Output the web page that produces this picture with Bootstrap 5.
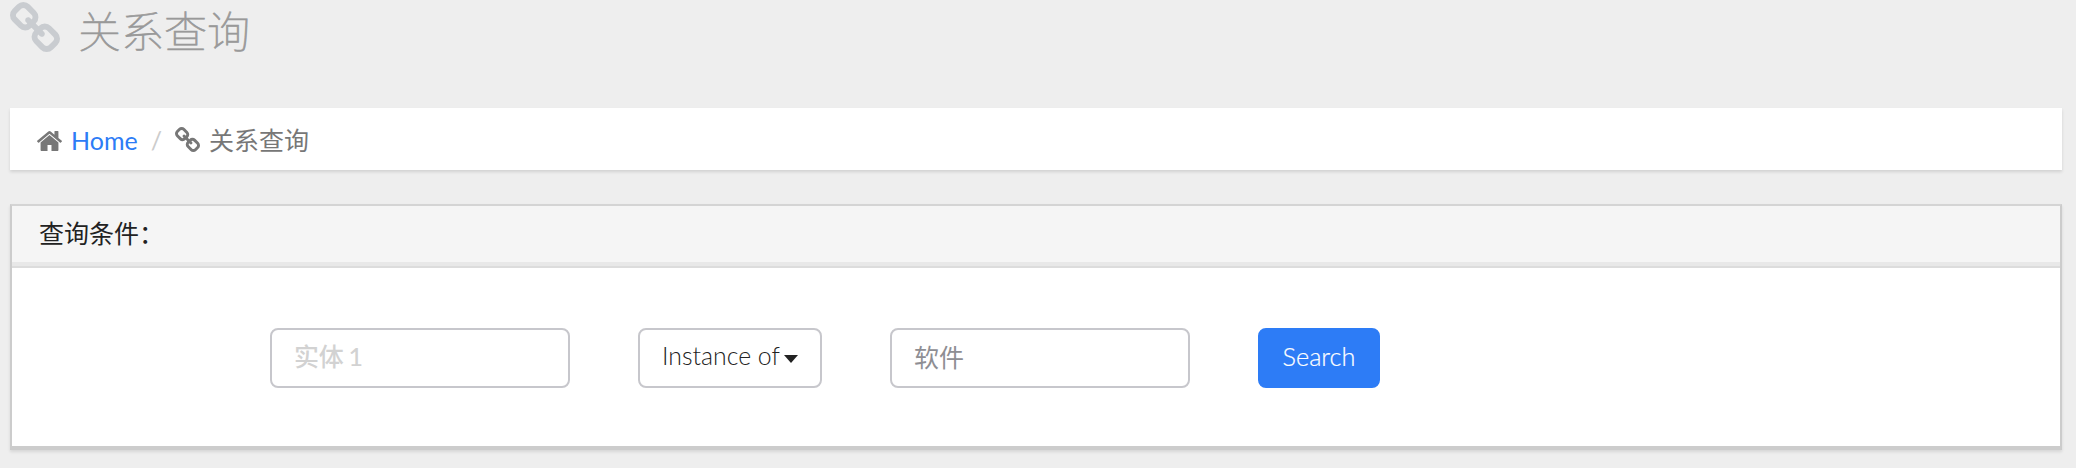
<!DOCTYPE html>
<html lang="zh-CN">
<head>
<meta charset="utf-8">
<meta name="viewport" content="width=device-width, initial-scale=1">
<title>关系查询</title>
<link rel="stylesheet" href="https://cdn.jsdelivr.net/npm/bootstrap@5.3.0/dist/css/bootstrap.min.css">
<style>
body{background:#eee;font-family:Lato,"Noto Sans CJK SC",sans-serif;font-size:25px;line-height:36px;color:#222;height:468px;overflow:hidden}
.page-wrap{padding:0 14px 0 10px}
.page-title{height:108px;gap:18px;font-size:43px;font-weight:100;line-height:50px;color:#999}
.page-title svg{width:50px;height:50px;margin-top:2px;fill:#c9ccd0}
.page-title span{margin-top:7px;-webkit-text-stroke:.7px #999}
.crumbs{height:62px;padding:0 27px;background:#fff;box-shadow:0 2px 3px rgba(0,0,0,.12);color:#777;font-size:25px}
.crumbs svg{fill:#777;flex:none}
.crumbs a{color:#2d7cf6;margin-left:9px}
.crumbs .sep{color:#ccc;margin:0 13px 0 13px}
.crumbs .here{margin-left:9px}
.crumbs a,.crumbs span{position:relative;top:1px}
.panel-box{margin-top:34px;height:246px;border:2px solid #ccc;border-top-color:#d4d4d4;border-bottom-width:4px;border-radius:0;box-shadow:0 2px 3px rgba(0,0,0,.1)}
.panel-head{height:62px;padding:9px 27px;background:#f5f5f5;border-bottom:2px solid #dcdcdc;border-radius:0!important;box-shadow:inset 0 -4px #e8e8e8;color:#222}
.query-row{padding:60px 0 0 258px;gap:68px}
.query-row .form-control,.query-row .btn{height:60px;font-size:25px;line-height:36px;border:2px solid #c7c7cc;border-radius:8px;padding:8px 22px 12px}
.query-row .form-control{width:300px;color:#8e8e93;font-weight:400}
.query-row .form-control::placeholder{color:#d2d2d2;opacity:1;font-weight:500;word-spacing:-1px;letter-spacing:-.3px}
.query-row .btn{font-weight:300;color:#222;white-space:nowrap}
.query-row .pick{width:184px;font-size:24.8px}
.query-row .dropdown-toggle::after{margin-left:4px;border-top:8px solid;border-left:7px solid transparent;border-right:7px solid transparent;vertical-align:2px}
.query-row .btn-primary{width:122px;background:#2d7cf6;border-color:#2d7cf6;color:#fff;font-size:25.3px;-webkit-text-stroke:.2px #fff}
</style>
</head>
<body>
<svg class="d-none" aria-hidden="true">
<symbol id="ic-link" viewBox="80 16 1632 1632"><path d="M1520 1216q0-40-28-68l-208-208q-28-28-68-28-42 0-72 32 3 3 19 18.500t21.500 21.500 15 19 13 25.500 3.500 27.500q0 40-28 68t-68 28q-15 0-27.500-3.500t-25.500-13-19-15-21.500-21.500-18.500-19q-33 31-33 73 0 40 28 68l206 207q27 27 68 27 40 0 68-26l147-146q28-28 28-67zm-703-705q0-40-28-68l-206-207q-28-28-68-28-39 0-68 27l-147 146q-28 28-28 67 0 40 28 68l208 208q27 27 68 27 42 0 72-31-3-3-19-18.500t-21.500-21.500-15-19-13-25.500-3.500-27.500q0-40 28-68t68-28q15 0 27.500 3.500t25.500 13 19 15 21.500 21.500 18.500 19q33-31 33-73zm895 705q0 120-85 203l-147 146q-83 83-203 83-121 0-204-85l-206-207q-83-83-83-203 0-123 88-209l-88-88q-86 88-208 88-120 0-204-84l-208-208q-84-84-84-204t85-203l147-146q83-83 203-83 121 0 204 85l206 207q83 83 83 203 0 123-88 209l88 88q86-88 208-88 120 0 204 84l208 208q84 84 84 204z"/></symbol>
<symbol id="ic-home" viewBox="89 253 1614 1283"><path d="M1472 992v480q0 26-19 45t-45 19h-384v-384h-256v384h-384q-26 0-45-19t-19-45v-480q0-1 .5-3t.5-3l575-474 575 474q1 2 1 6zm223-69l-62 74q-8 9-21 11h-3q-13 0-21-7l-692-577-692 577q-12 8-24 7-13-2-21-11l-62-74q-8-10-7-23.500t11-21.500l719-599q32-26 76-26t76 26l244 204v-195q0-14 9-23t23-9h192q14 0 23 9t9 23v408l219 182q10 8 11 21.500t-7 23.500z"/></symbol>
</svg>
<div class="page-wrap">
<h1 class="page-title d-flex align-items-start m-0"><svg><use href="#ic-link"/></svg><span>关系查询</span></h1>
<nav class="crumbs d-flex align-items-center">
<svg width="25" height="20" class="mt-1"><use href="#ic-home"/></svg><a href="#" class="text-decoration-none">Home</a><span class="sep">/</span><svg width="25" height="25"><use href="#ic-link"/></svg><span class="here">关系查询</span>
</nav>
<section class="card panel-box">
<div class="card-header panel-head">查询条件：</div>
<form class="query-row d-flex">
<input class="form-control" type="text" placeholder="实体 1">
<button class="btn pick dropdown-toggle" type="button">Instance of</button>
<input class="form-control" type="text" value="软件">
<button class="btn btn-primary" type="button">Search</button>
</form>
</section>
</div>
<script src="https://cdn.jsdelivr.net/npm/bootstrap@5.3.0/dist/js/bootstrap.bundle.min.js"></script>
</body>
</html>
